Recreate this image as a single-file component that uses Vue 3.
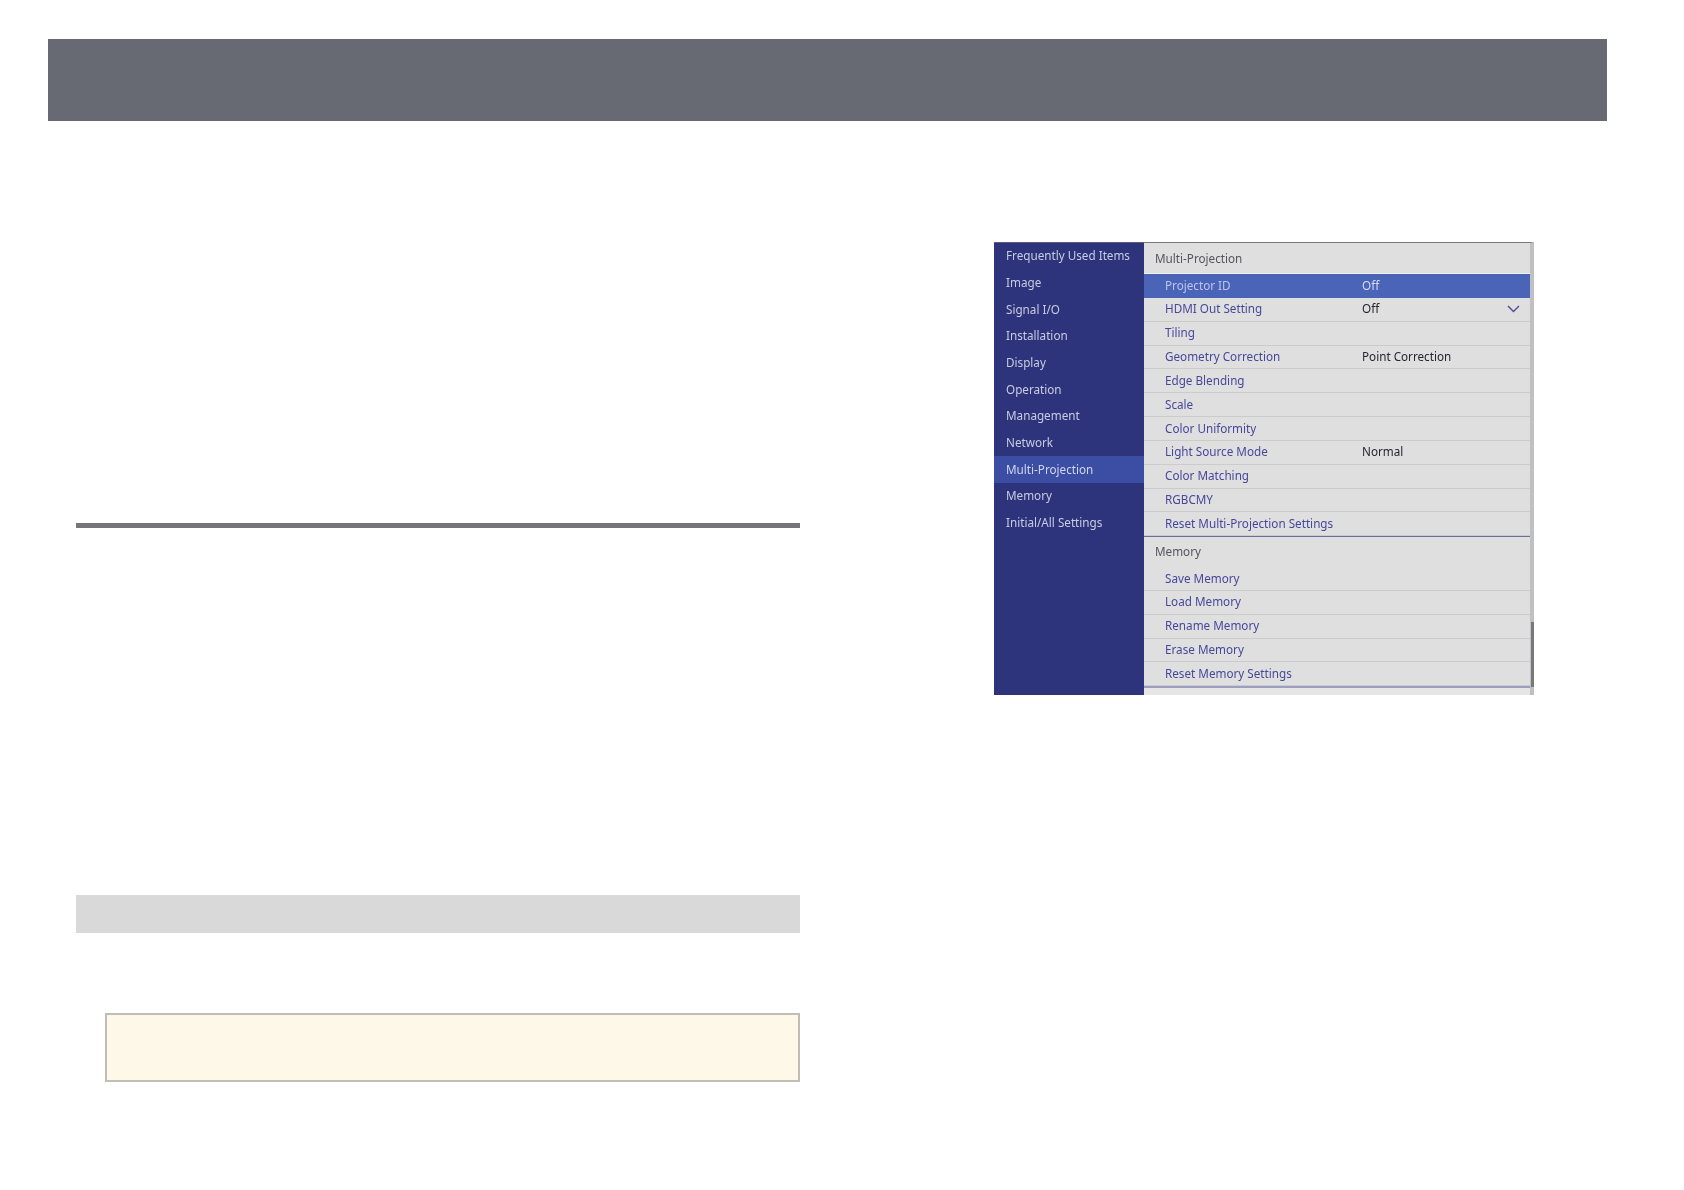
<script setup>
const sideItems = [
  'Frequently Used Items', 'Image', 'Signal I/O', 'Installation', 'Display', 'Operation',
  'Management', 'Network', 'Multi-Projection', 'Memory', 'Initial/All Settings'
]
const multiRows = [
  { label: 'Projector ID', value: 'Off', selected: true },
  { label: 'HDMI Out Setting', value: 'Off', chevron: true },
  { label: 'Tiling' },
  { label: 'Geometry Correction', value: 'Point Correction' },
  { label: 'Edge Blending' },
  { label: 'Scale' },
  { label: 'Color Uniformity' },
  { label: 'Light Source Mode', value: 'Normal' },
  { label: 'Color Matching' },
  { label: 'RGBCMY' },
  { label: 'Reset Multi-Projection Settings' }
]
const memoryRows = [
  { label: 'Save Memory' },
  { label: 'Load Memory' },
  { label: 'Rename Memory' },
  { label: 'Erase Memory' },
  { label: 'Reset Memory Settings' }
]
</script>

<template>
  <div class="page">
    <header class="top-bar"></header>
    <main class="columns">
      <section class="left">
        <div class="rule"></div>
        <div class="band"></div>
        <div class="callout"></div>
      </section>
      <section class="right">
        <div class="menu">
          <nav class="side">
            <div
              v-for="item in sideItems"
              :key="item"
              class="side-item"
              :class="{ active: item === 'Multi-Projection' }"
            >{{ item }}</div>
          </nav>
          <div class="panel">
            <div class="group-title first">Multi-Projection</div>
            <div
              v-for="row in multiRows"
              :key="row.label"
              class="row"
              :class="{ selected: row.selected }"
            >
              <span class="label">{{ row.label }}</span>
              <span v-if="row.value" class="value">{{ row.value }}</span>
              <svg v-if="row.chevron" class="chevron" width="13" height="8" viewBox="0 0 13 8">
                <path d="M1 1 L6.5 6.5 L12 1" fill="none" stroke="#4a4c90" stroke-width="1.4" />
              </svg>
            </div>
            <div class="group-title">Memory</div>
            <div v-for="row in memoryRows" :key="row.label" class="row">
              <span class="label">{{ row.label }}</span>
            </div>
            <div class="panel-end"></div>
            <div class="scroll-thumb"></div>
          </div>
        </div>
      </section>
    </main>
  </div>
</template>

<style>
html, body { background: #fff; }
</style>

<style scoped>
.page {
  width: 1684px;
  height: 1190px;
  padding-top: 39px;
  box-sizing: border-box;
  overflow: hidden;
  background: #fff;
  font-family: "Noto Sans", "Open Sans", sans-serif;
}
.top-bar {
  height: 82px;
  margin: 0 77px 0 48px;
  background: #676a72;
}
.columns {
  display: grid;
  grid-template-columns: 724px 540px;
  column-gap: 194px;
  padding-left: 76px;
  align-items: start;
}
.left { padding-top: 402px; }
.rule { height: 5px; background: #76767a; }
.band { height: 38px; margin-top: 367px; background: #d9d9d9; }
.callout {
  height: 69px;
  box-sizing: border-box;
  margin: 80px 0 0 29px;
  border: 2px solid #bfbdb5;
  background: #fdf8e7;
}
.right { padding-top: 121px; }
.menu {
  display: flex;
  height: 453px;
  overflow: hidden;
  filter: blur(0.35px);
  font-size: 11.7px;
  line-height: 1;
}
.side {
  width: 150px;
  flex: none;
  box-sizing: border-box;
  background: #2d347c;
  border-top: 1px solid #5a5d80;
}
.side-item {
  height: 26.65px;
  display: flex;
  align-items: center;
  padding-left: 12px;
  color: #c8cce2;
  white-space: nowrap;
}
.side-item.active {
  background: #3b4ea3;
  color: #d0d5ee;
}
.panel {
  position: relative;
  flex: 1;
  background: #dfdfdf;
  border-top: 1px solid #77777f;
  border-right: 4px solid #c0c0c2;
}
.group-title {
  height: 31.7px;
  margin-top: -1px;
  display: flex;
  align-items: center;
  padding-left: 11px;
  color: #55555f;
  box-sizing: border-box;
  border-top: 2px solid #6b6da0;
}
.group-title.first {
  height: 30px;
  margin-top: 0;
  padding-top: 2px;
  border-top: 0;
}
.row {
  position: relative;
  height: 23.85px;
  box-sizing: border-box;
  display: flex;
  align-items: center;
  padding-left: 21px;
  color: #46489a;
  border-bottom: 1px solid #cbcbcc;
  white-space: nowrap;
}
.label { width: 197px; flex: none; }
.value { color: #26262c; }
.row.selected {
  height: 24.85px;
  background: #4a64b8;
  color: #bac6ee;
  border-bottom: 0;
  border-top: 1px solid #f0f0f4;
}
.row.selected .value { color: #d5dbf3; }
.chevron {
  position: absolute;
  right: 10px;
  top: 7px;
}
.panel-end {
  height: 9px;
  border-top: 2px solid #9c9dc0;
  background: #e6e6e6;
}
.scroll-thumb {
  position: absolute;
  right: -4px;
  top: 379px;
  width: 3px;
  height: 65px;
  background: #77777c;
}
</style>
